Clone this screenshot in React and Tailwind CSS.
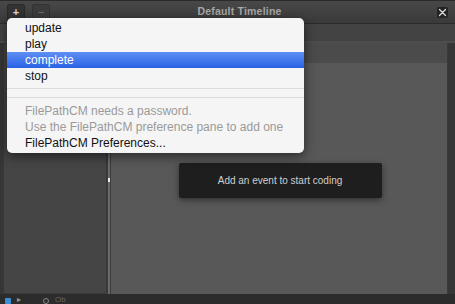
export default function App() {
  return (
    <div className="relative w-[455px] h-[304px] overflow-hidden bg-[#363636] font-['Liberation_Sans',Arial,sans-serif]">
      {/* Title bar */}
      <div className="h-[24px] flex items-center bg-gradient-to-b from-[#484848] to-[#3a3a3a] border-t border-t-[#2a2a2a] border-b border-b-[#2b2b2b]">
        <div className="ml-[7px] w-[18px] h-[17px] mt-[1px] rounded-[2px] bg-[#333] border border-[#2a2a2a] flex items-center justify-center text-[#ddd] text-[11px] font-bold leading-none">+</div>
        <div className="ml-[7px] w-[18px] h-[17px] mt-[1px] rounded-[2px] bg-[#3c3c3c] border border-[#333] flex items-center justify-center text-[#777] text-[11px] leading-none">−</div>
        <div className="flex-1 text-center text-[10.5px] font-bold text-[#a8a8a8] tracking-[0.2px] pr-[8px]">Default Timeline</div>
        <div className="mr-[7px] w-[11px] h-[11px] rounded-[2px] bg-[#222] flex items-center justify-center">
          <svg width="9" height="9" viewBox="0 0 9 9">
            <path d="M1.5 1.5 L7.5 7.5 M7.5 1.5 L1.5 7.5" stroke="#d8d8d8" strokeWidth="1.4" strokeLinecap="round" />
          </svg>
        </div>
      </div>

      {/* Toolbar band */}
      <div className="h-[19px] bg-[#434343] border-b-2 border-b-[#4d4d4d]" />

      {/* Panels */}
      <div className="flex h-[251px]">
        <div className="ml-[3px] w-[104px] bg-[#454545] border border-[#383838]" />
        <div className="relative w-[4px] flex justify-center bg-[#3c3c3c]">
          <div className="w-[2px] h-full bg-[#6a6a6a]" />
          <div className="absolute top-[135px] left-[1px] w-[2px] h-[4px] bg-[#eee]" />
        </div>
        <div className="w-[337px] flex flex-col border-r border-[#3a3a3a]">
          <div className="h-[20px] bg-[#4b4b4b]" />
          <div className="flex-1 bg-[#585858] flex justify-center pt-[100px]">
            <div className="ml-[2px] w-[203px] h-[35px] bg-[#1e1e1e] rounded-[2px] shadow-[0_2px_6px_rgba(0,0,0,0.45)] flex items-center justify-center text-[10px] text-[#cfcfcf]">
              Add an event to start coding
            </div>
          </div>
        </div>
      </div>

      {/* Bottom strip */}
      <div className="h-[10px] bg-[#2c2c2c] flex items-end gap-[6px] pl-[5px]">
        <div className="w-[6px] h-[6px] bg-[#3a8fd8] rounded-[1px]" />
        <div className="text-[8px] leading-none text-[#999]">▸</div>
        <div className="ml-[16px] w-[6px] h-[6px] rounded-full border border-[#888]" />
        <div className="text-[8px] leading-none text-[#666]">Ob</div>
      </div>

      {/* Dropdown menu */}
      <div className="absolute left-[7px] top-[18px] w-[297px] rounded-[5px] bg-[#f5f5f5] shadow-[0_3px_12px_rgba(0,0,0,0.55)] pt-[2px] pb-[2px] text-[12px] text-[#111]">
        <div className="h-[16px] leading-[16px] pl-[18px]">update</div>
        <div className="h-[16px] leading-[16px] pl-[18px]">play</div>
        <div className="h-[16px] leading-[16px] pl-[18px] bg-gradient-to-b from-[#5f8ff4] to-[#2a62e4] text-white">complete</div>
        <div className="h-[16px] leading-[16px] pl-[18px]">stop</div>
        <div className="mt-[4px] h-px bg-[#dcdcdc]" />
        <div className="mt-[8px] h-px bg-[#dcdcdc]" />
        <div className="mt-[5px] h-[16px] leading-[16px] pl-[18px] text-[#9a9a9a]">FilePathCM needs a password.</div>
        <div className="h-[16px] leading-[16px] pl-[18px] text-[#9a9a9a]">Use the FilePathCM preference pane to add one</div>
        <div className="h-[16px] leading-[16px] pl-[18px]">FilePathCM Preferences...</div>
      </div>
    </div>
  )
}
